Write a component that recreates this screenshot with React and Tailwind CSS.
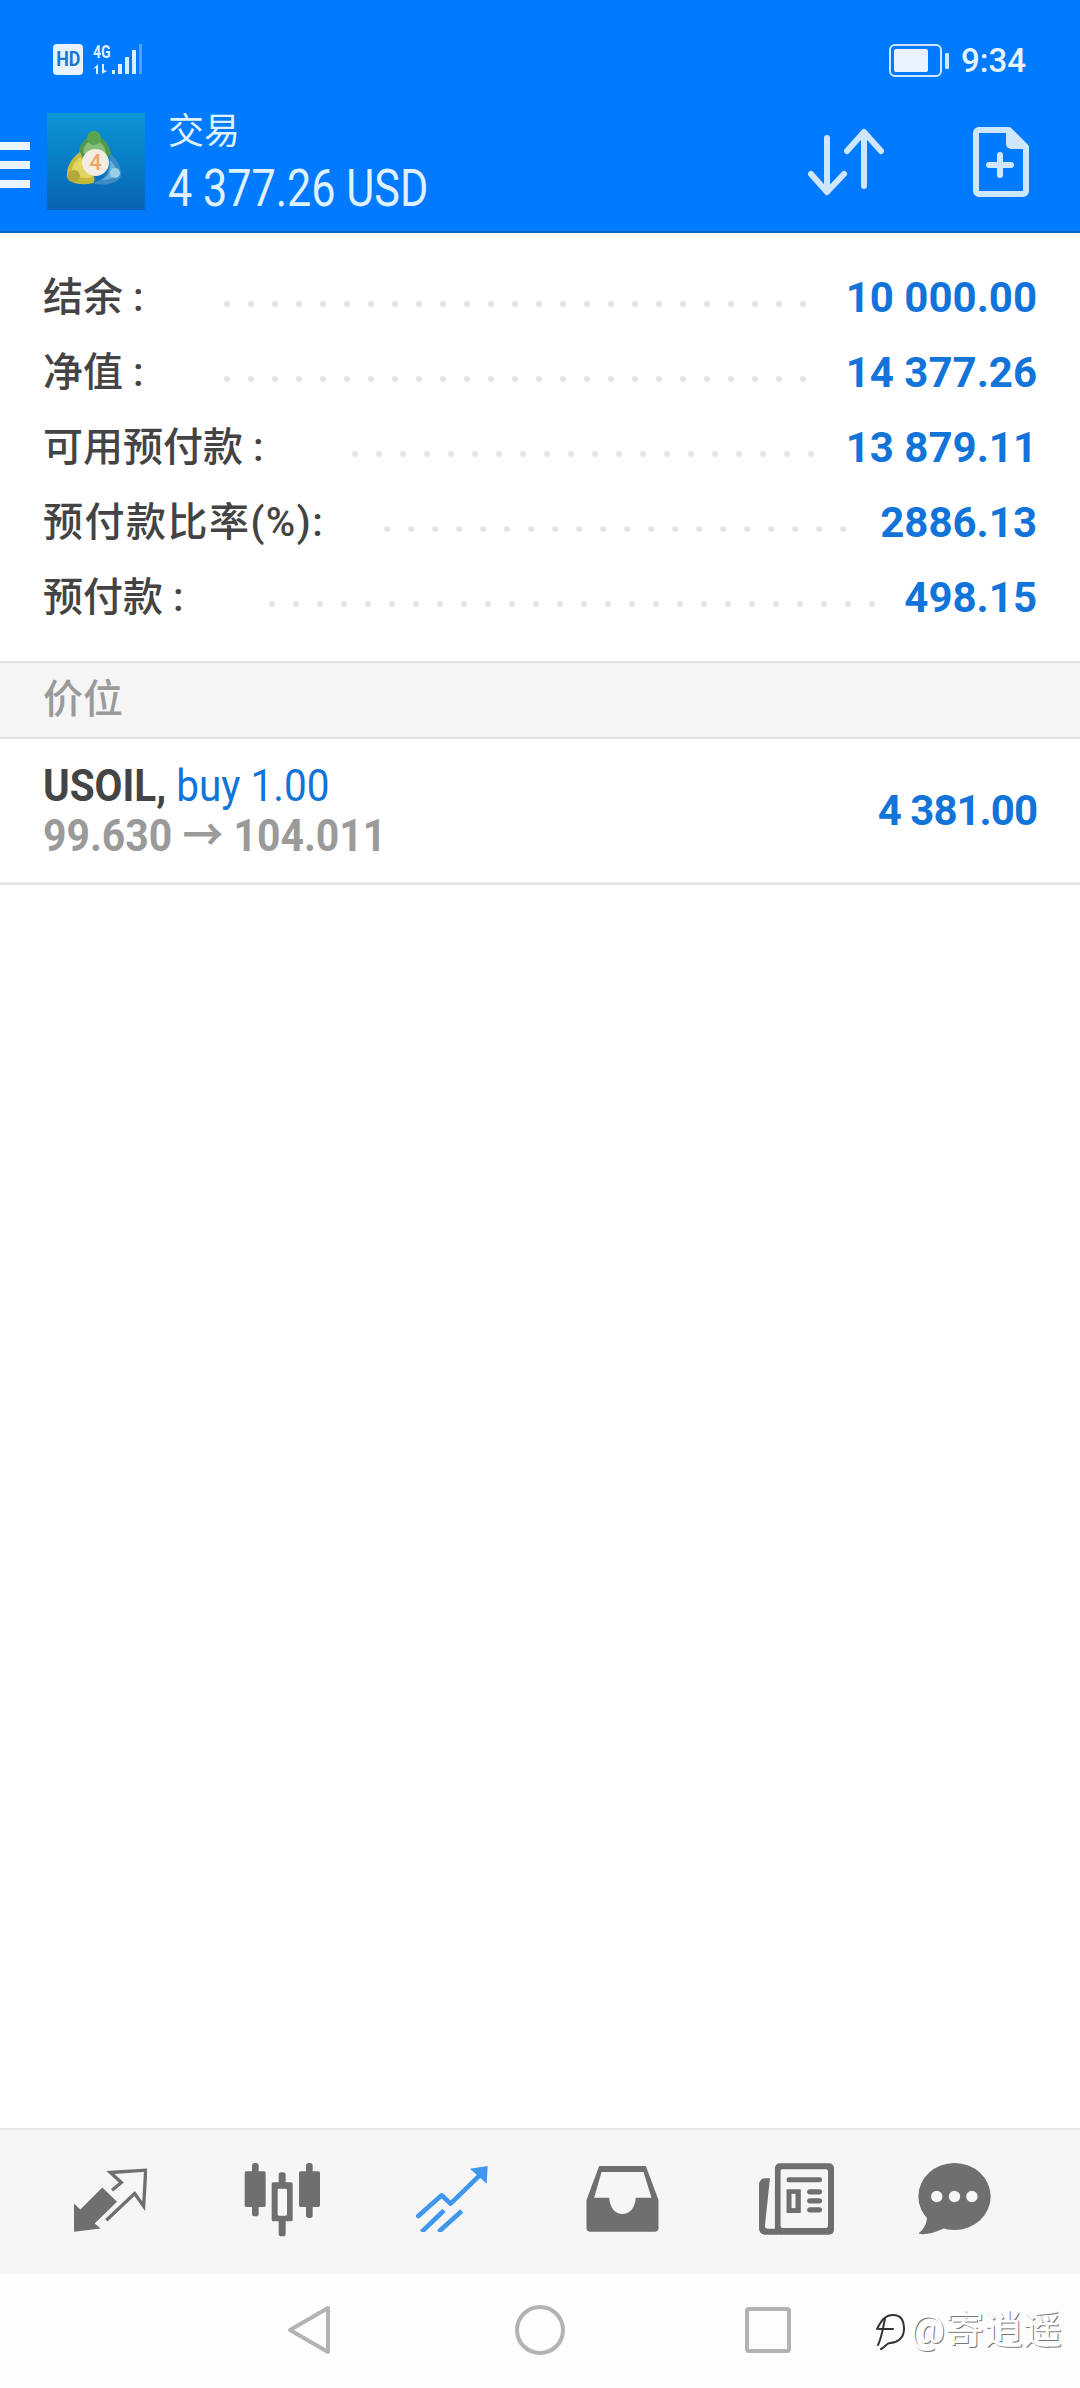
import React from "react";

const accounts = [
  { label: "结余 :", value: "10 000.00", dots: 25, gap: "mr-[40px]" },
  { label: "净值 :", value: "14 377.26", dots: 25, gap: "mr-[40px]" },
  { label: "可用预付款 :", value: "13 879.11", dots: 20, gap: "mr-[32px]" },
  { label: "预付款比率(%):", value: "2886.13", dots: 20, gap: "mr-[34px]", wide: true },
  { label: "预付款 :", value: "498.15", dots: 26, gap: "mr-[29px]" },
];

const Dots = ({ count, gap }) => (
  <div className={`flex flex-1 justify-end gap-[18px] mt-[12px] overflow-hidden ${gap}`}>
    {Array.from({ length: count }).map((_, i) => (
      <span key={i} className="w-[6px] h-[6px] shrink-0 rounded-full bg-[#e4e4e4]" />
    ))}
  </div>
);

const MtLogo = () => (
  <div className="relative w-[98px] h-[97px] ml-[17px] pl-[19px] pt-[17px] bg-gradient-to-b from-[#0d97d6] to-[#0a62b5]">
    <svg width="56" height="56" viewBox="0 0 56 56">
      <path d="M13 24C12 15 20 6 28 6s16 8 17 19L30 32z" fill="#4f9a4a" />
      <path d="M17 23c0-8 6-13 11-13s11 5 12 13L29 30z" fill="#86bd78" />
      <circle cx="28" cy="8" r="7" fill="#5aa552" />
      <path d="M14 22C5 28 0 38 1 47c1 6 14 9 26 6 2-1 2-6 0-9L18 30z" fill="#c5b93f" />
      <path d="M14 27C8 32 5 38 6 43c5 5 14 6 20 4L18 32z" fill="#e0d661" />
      <circle cx="8" cy="46" r="6" fill="#b3a73a" />
      <path d="M44 24c8 5 12 15 11 22-2 7-18 11-29 7 7-1 14-6 16-12 1-5 1-11 2-17z" fill="#3d8dc4" />
      <path d="M44 30c4 4 7 9 7 14-3 4-10 6-15 6 6-3 9-8 8-20z" fill="#68b2dc" />
      <circle cx="49" cy="43" r="5" fill="#9bd0ea" />
    </svg>
    <div className="absolute left-[35px] top-[36px] w-[27px] h-[27px] rounded-full bg-[#f3ece2] text-[#eda765] text-[22px] leading-[27px] font-medium text-center">
      4
    </div>
  </div>
);

const StatusBar = () => (
  <div className="flex items-start justify-between h-[34px] mt-[44px] pl-[53px] pr-[53px]">
    <div className="flex items-start">
      <div className="w-[30px] h-[31px] rounded-[4px] bg-[#e8f3ff] text-[#1978d8] text-[21px] leading-[31px] font-bold text-center">
        <span className="inline-block scale-x-[.85]">HD</span>
      </div>
      <div className="ml-[10px] flex items-end h-[30px]">
        <div className="w-[17px] flex flex-col text-[#dcefff] leading-none">
          <span className="text-[18px] font-bold h-[14px] leading-[14px] origin-left scale-x-[.78]">4G</span>
          <svg className="mt-[5px]" width="16" height="10" viewBox="0 0 16 10" fill="#dcefff">
            <path d="M5 0v10H3V4L0 5zM9 0v10l5-3-3-1V0z" />
          </svg>
        </div>
        <div className="flex items-end gap-[3px] ml-[2px]">
          <span className="w-[3px] h-[4px] bg-[#dcefff]" />
          <span className="w-[4px] h-[10px] bg-[#dcefff]" />
          <span className="w-[4px] h-[17px] bg-[#dcefff]" />
          <span className="w-[4px] h-[24px] bg-[#dcefff]" />
          <span className="w-[3px] h-[30px] bg-[#4ea4fb]" />
        </div>
      </div>
    </div>
    <div className="flex items-center h-[33px] mr-[1px]">
      <div className="w-[53px] h-[33px] rounded-[6px] border-[2px] border-[#cfe8ff] p-[3px]">
        <div className="w-[34px] h-full rounded-[2px] bg-[#e8f3ff]" />
      </div>
      <div className="w-[4px] h-[16px] ml-[3px] rounded-[1px] bg-[#cfe8ff]" />
      <span className="ml-[12px] text-[33px] font-medium leading-none text-[#e6f4ff]">9:34</span>
    </div>
  </div>
);

const Header = () => (
  <header className="h-[233px] bg-[#007aff] border-b-[2px] border-[#0a63c4]">
    <StatusBar />
    <div className="flex items-start mt-[35px]">
      <div className="flex flex-col gap-[11px] w-[30px] mt-[29px]">
        <span className="h-[8px] bg-[#e9f5ff]" />
        <span className="h-[8px] bg-[#e9f5ff]" />
        <span className="h-[8px] bg-[#e9f5ff]" />
      </div>
      <MtLogo />
      <div className="ml-[23px] -mt-[2px] text-[#dff1ff] flex flex-col">
        <span className="text-[36px] leading-[42px]">交易</span>
        <span className="mt-[6px] text-[52px] leading-[60px] origin-left scale-x-[.83] whitespace-nowrap">4 377.26 USD</span>
      </div>
      <div className="ml-auto mr-[51px] mt-[14px] flex items-center">
        <svg width="80" height="70" viewBox="0 0 80 70" fill="none" stroke="#cfe6ff" strokeWidth="6" strokeLinecap="round" strokeLinejoin="round">
          <path d="M20 11v53M4 47l16 18 17-18" />
          <path d="M57 6v53M40 24L57 5l17 19" />
        </svg>
        <svg className="ml-[86px]" width="56" height="70" viewBox="0 0 56 70">
          <path d="M6 3h30l17 17v44a3 3 0 0 1-3 3H6a3 3 0 0 1-3-3V6a3 3 0 0 1 3-3z" fill="none" stroke="#cfe6ff" strokeWidth="6" strokeLinejoin="round" />
          <path d="M33 3l20 19H38a5 5 0 0 1-5-5z" fill="#cfe6ff" />
          <path d="M27 28v20M16 38h22" stroke="#cfe6ff" strokeWidth="6" strokeLinecap="round" />
        </svg>
      </div>
    </div>
  </header>
);

const TabIcons = () => (
  <div className="h-[146px] shrink-0 bg-[#f6f6f6] border-t-[2px] border-[#e6e6e6] flex items-start pt-[38px] pl-[73px]">
    <svg width="74" height="66" viewBox="100 145 222 195">
      <path d="M103 250l19 18 66-66 44 43-67 65 18 15-80 10z" fill="#6f6f6f" />
      <path d="M200 300l85-80 27 38 6-108-106 7 33 30-28 23" fill="none" stroke="#6f6f6f" strokeWidth="10" />
    </svg>
    <svg className="ml-[97px] -mt-[5px]" width="76" height="74" viewBox="610 130 228 222" fill="#6f6f6f">
      <rect x="612" y="155" width="63" height="107" rx="5" />
      <rect x="634" y="130" width="20" height="160" rx="8" />
      <rect x="714" y="158" width="21" height="192" rx="8" />
      <rect x="693" y="188" width="63" height="117" rx="5" />
      <rect x="711" y="207" width="28" height="81" rx="4" fill="#f6f6f6" />
      <rect x="775" y="155" width="63" height="107" rx="5" />
      <rect x="796" y="130" width="20" height="165" rx="8" />
    </svg>
    <svg className="ml-[96px] -mt-[2px]" width="72" height="66" viewBox="1133 137 216 198" fill="none" stroke="#3f97ee" strokeLinecap="round">
      <path d="M1140 287l70-62 27 25 90-88" strokeWidth="14" strokeLinejoin="round" />
      <path d="M1295 145l53-8-3 53z" fill="#3f97ee" stroke="none" />
      <path d="M1155 330l57-55M1206 330l59-53" strokeWidth="14" strokeLinecap="square" />
    </svg>
    <svg className="ml-[98px] -mt-[2px]" width="73" height="66" viewBox="92 138 216 198">
      <path d="M130 138h140l38 102v85a10 10 0 0 1-10 10H102a10 10 0 0 1-10-10v-85z" fill="#6f6f6f" />
      <path d="M137 156h126l24 77h-47c-2 32-20 49-40 49s-38-17-40-49h-45z" fill="#f6f6f6" />
    </svg>
    <svg className="ml-[100px] -mt-[5px]" width="75" height="72" viewBox="607 130 226 215">
      <rect x="655" y="130" width="178" height="215" rx="14" fill="#6f6f6f" />
      <path d="M640 175h-15a18 18 0 0 0-18 18v134a18 18 0 0 0 18 18h40v-18h-30a10 10 0 0 1-10-10z" fill="#6f6f6f" />
      <rect x="672" y="148" width="143" height="177" rx="6" fill="#f6f6f6" />
      <rect x="690" y="172" width="107" height="15" rx="7" fill="#6f6f6f" />
      <rect x="690" y="208" width="43" height="72" rx="3" fill="#6f6f6f" />
      <rect x="705" y="222" width="12" height="43" fill="#f6f6f6" />
      <rect x="752" y="208" width="45" height="16" rx="8" fill="#6f6f6f" />
      <rect x="752" y="235" width="45" height="16" rx="8" fill="#6f6f6f" />
      <rect x="752" y="262" width="45" height="16" rx="8" fill="#6f6f6f" />
    </svg>
    <svg className="ml-[84px] -mt-[5px]" width="73" height="72" viewBox="1086 130 216 215">
      <ellipse cx="1194" cy="230" rx="108" ry="100" fill="#6f6f6f" />
      <path d="M1112 290c0 20-10 38-25 50 4 6 50 2 80-18z" fill="#6f6f6f" />
      <circle cx="1141" cy="230" r="17" fill="#f6f6f6" />
      <circle cx="1194" cy="230" r="17" fill="#f6f6f6" />
      <circle cx="1246" cy="230" r="17" fill="#f6f6f6" />
    </svg>
  </div>
);

const NavBar = () => (
  <div className="h-[114px] shrink-0 bg-[#fdfdfd] flex items-center pl-[287px] pb-[2px]">
    <svg width="44" height="50" viewBox="0 0 44 50" fill="none" stroke="#b3b3b3" strokeWidth="4" strokeLinejoin="round">
      <path d="M41 3v44L3 25z" />
    </svg>
    <svg className="ml-[183px]" width="52" height="52" viewBox="0 0 52 52" fill="none" stroke="#b3b3b3" strokeWidth="4">
      <circle cx="26" cy="26" r="23" />
    </svg>
    <svg className="ml-[179px]" width="46" height="46" viewBox="0 0 46 46" fill="none" stroke="#b3b3b3" strokeWidth="4" strokeLinejoin="round">
      <rect x="2" y="2" width="42" height="42" rx="2" />
    </svg>
    <div className="ml-[80px] flex items-center text-[39px] leading-none text-white [text-shadow:1px_1px_0_#777]">
      <svg width="36" height="46" viewBox="0 0 36 46" fill="none" stroke="#333" strokeWidth="2" strokeLinecap="round">
        <path d="M6 22c4-8 8-14 16-14 8 0 11 6 11 14 0 10-8 14-14 14-3 0-5 4-9 6" />
        <path d="M14 12c-2 8-3 18-7 26M8 22h14" />
      </svg>
      <span className="ml-[3px] whitespace-nowrap">@寄逍遥</span>
    </div>
  </div>
);

const App = () => {
  return (
    <div className="w-[1080px] h-[2388px] flex flex-col bg-white overflow-hidden font-[Roboto,'Noto_Sans_CJK_SC',sans-serif]">
      <Header />

      <section className="px-[43px] pt-[27px] pb-[26px]">
        {accounts.map((row) => (
          <div key={row.label} className="flex items-center h-[75px] whitespace-nowrap">
            <span className={`text-[40px] font-medium text-[#444444] ${row.wide ? "tracking-[1.5px]" : ""}`}>{row.label}</span>
            <Dots count={row.dots} gap={row.gap} />
            <span className="text-[42px] font-bold text-[#1274d8]">{row.value}</span>
          </div>
        ))}
      </section>

      <div className="h-[78px] bg-[#f5f5f5] border-y-[2px] border-[#e3e3e3] px-[43px] flex items-center text-[40px] font-medium text-[#9a9a9a]">
        价位
      </div>

      <div className="h-[146px] border-b-[3px] border-[#e6e6e6] px-[43px] flex items-center justify-between">
        <div className="flex flex-col text-[44px] leading-[50px] whitespace-nowrap">
          <div className="origin-left scale-x-[.92]">
            <span className="font-bold text-[#444444]">USOIL, </span>
            <span className="text-[#1274d8]">buy 1.00</span>
          </div>
          <div className="origin-left scale-x-[.93] font-bold text-[#9a9a9a]">99.630 → 104.011</div>
        </div>
        <span className="text-[42px] font-bold tracking-[-1px] text-[#1274d8]">4 381.00</span>
      </div>

      <div className="flex-1" />

      <TabIcons />
      <NavBar />
    </div>
  );
};

export default App;
